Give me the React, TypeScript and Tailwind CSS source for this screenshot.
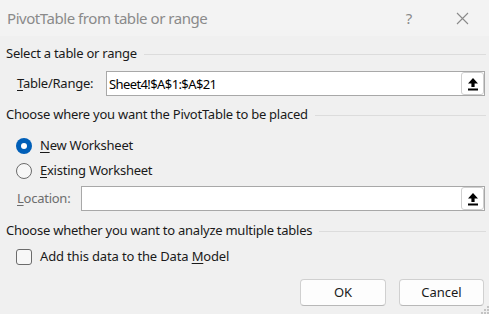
import React, { useState } from 'react';

const font = { fontFamily: '"Noto Sans", "Open Sans", Arial, sans-serif' };

const UploadIcon = () => (
  <svg width="12" height="14" viewBox="0 0 12 14" fill="#000">
    <path d="M6 1 L11 6.5 H7.6 V10 H4.4 V6.5 H1 Z" />
    <rect x="1" y="11.5" width="10" height="2" />
  </svg>
);

const Heading: React.FC<{ text: string; className?: string }> = ({ text, className = '' }) => (
  <div className={`flex items-center h-[18px] pl-[6px] pr-[3px] ${className}`}>
    <span className="text-[13px] tracking-[-0.25px] text-[#1a1a1a] whitespace-nowrap">{text}</span>
    <div className="flex-1 h-px bg-[#dcdcdc] ml-[7px]" />
  </div>
);

const RangeInput: React.FC<{ value: string; onChange: (v: string) => void }> = ({ value, onChange }) => (
  <div className="flex-1 h-[25px] bg-white border border-[#a8a8a8] flex items-center">
    <input
      value={value}
      onChange={(e) => onChange(e.target.value)}
      className="flex-1 min-w-0 h-full px-[2px] text-[13px] tracking-[-0.6px] text-black bg-transparent outline-none"
      style={font}
    />
    <button className="w-[23px] h-[23px] flex items-center justify-center bg-white border border-[#cfcfcf] rounded-[3px]">
      <UploadIcon />
    </button>
  </div>
);

const Radio: React.FC<{ on: boolean }> = ({ on }) =>
  on ? (
    <span className="w-[16px] h-[16px] rounded-full bg-[#005fb8] flex items-center justify-center">
      <span className="w-[6px] h-[6px] rounded-full bg-white" />
    </span>
  ) : (
    <span className="w-[16px] h-[16px] rounded-full border border-[#6b6b6b] bg-[#f7f7f7]" />
  );

export default function App() {
  const [range, setRange] = useState('Sheet4!$A$1:$A$21');
  const [location, setLocation] = useState('');
  const [placement, setPlacement] = useState<'new' | 'existing'>('new');
  const [dataModel, setDataModel] = useState(false);

  return (
    <div className="w-[489px] h-[314px] bg-[#f0f0f0] relative overflow-hidden select-none" style={font}>
      <div className="h-[36px] bg-[#f3f3f3] flex items-center pl-[7px]">
        <span className="text-[15px] tracking-[-0.45px] text-[#8a8a8a] flex-1">PivotTable from table or range</span>
        <span className="text-[15px] text-[#8a8a8a] w-[20px] text-center mr-[37px]">?</span>
        <svg width="13" height="13" viewBox="0 0 13 13" className="mr-[20px]" stroke="#8a8a8a" strokeWidth="1.1">
          <path d="M1 1 L12 12 M12 1 L1 12" />
        </svg>
      </div>

      <Heading text="Select a table or range" className="mt-[9px]" />

      <div className="flex items-center mt-[8px] pl-[17px] pr-[4px]">
        <span className="text-[13px] tracking-[-0.25px] text-[#1a1a1a] w-[89px]">
          <span className="underline underline-offset-2">T</span>able/Range:
        </span>
        <RangeInput value={range} onChange={setRange} />
      </div>

      <Heading text="Choose where you want the PivotTable to be placed" className="mt-[10px]" />

      <div className="flex flex-col gap-[5px] mt-[12px] pl-[16px]">
        <label className="flex items-center h-[20px] gap-[8px] cursor-pointer" onClick={() => setPlacement('new')}>
          <Radio on={placement === 'new'} />
          <span className="text-[13px] tracking-[-0.25px] text-[#1a1a1a]">
            <span className="underline underline-offset-2">N</span>ew Worksheet
          </span>
        </label>
        <label className="flex items-center h-[20px] gap-[8px] cursor-pointer" onClick={() => setPlacement('existing')}>
          <Radio on={placement === 'existing'} />
          <span className="text-[13px] tracking-[-0.25px] text-[#1a1a1a]">
            <span className="underline underline-offset-2">E</span>xisting Worksheet
          </span>
        </label>
      </div>

      <div className="flex items-center mt-[5px] pl-[17px] pr-[4px]">
        <span className="text-[13px] tracking-[-0.25px] text-[#6d6d6d] w-[64px]">
          <span className="underline underline-offset-2">L</span>ocation:
        </span>
        <RangeInput value={location} onChange={setLocation} />
      </div>

      <Heading text="Choose whether you want to analyze multiple tables" className="mt-[11px]" />

      <label className="flex items-center h-[20px] gap-[8px] mt-[7px] pl-[16px] cursor-pointer" onClick={() => setDataModel(!dataModel)}>
        <span className={`w-[16px] h-[16px] rounded-[3px] border ${dataModel ? 'bg-[#005fb8] border-[#005fb8]' : 'border-[#6b6b6b] bg-[#f7f7f7]'}`} />
        <span className="text-[13px] tracking-[-0.15px] text-[#1a1a1a]">
          Add this data to the Data <span className="underline underline-offset-2">M</span>odel
        </span>
      </label>

      <div className="flex justify-end gap-[13px] mt-[12px] pr-[5px]">
        <button className="w-[86px] h-[27px] bg-[#fdfdfd] border border-[#d0d0d0] border-b-[#b8b8b8] rounded-[4px] text-[13px] text-[#1a1a1a]" style={font}>
          OK
        </button>
        <button className="w-[85px] h-[27px] bg-[#fdfdfd] border border-[#d0d0d0] border-b-[#b8b8b8] rounded-[4px] text-[13px] text-[#1a1a1a]" style={font}>
          Cancel
        </button>
      </div>

      <svg width="8" height="8" viewBox="0 0 8 8" className="absolute right-0 bottom-0" fill="#c4c4c4">
        <rect x="6" y="0" width="2" height="2" />
        <rect x="3" y="3" width="2" height="2" />
        <rect x="6" y="3" width="2" height="2" />
        <rect x="0" y="6" width="2" height="2" />
        <rect x="3" y="6" width="2" height="2" />
        <rect x="6" y="6" width="2" height="2" />
      </svg>
    </div>
  );
}
